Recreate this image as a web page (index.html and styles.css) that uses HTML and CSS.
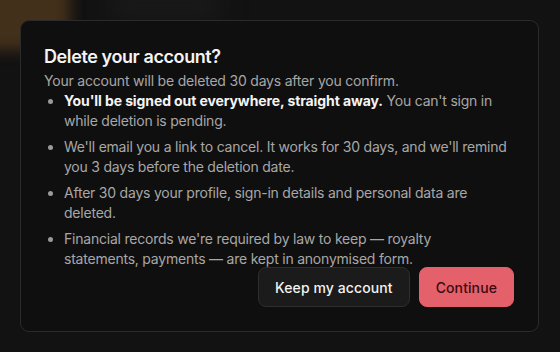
FILE: index.html
```html
<!DOCTYPE html>
<html lang="en">
<head>
<meta charset="utf-8">
<title>Delete your account?</title>
<link rel="stylesheet" href="styles.css">
</head>
<body>
<div class="backdrop">
  <div class="glow"></div>
  <div class="haze"></div>
  <section class="dialog" role="dialog" aria-labelledby="dlg-title">
    <h2 id="dlg-title" class="title">Delete your account?</h2>
    <p class="lead">Your account will be deleted 30 days after you confirm.</p>
    <ul class="points">
      <li><strong>You'll be signed out everywhere, straight away.</strong> You can't sign in while deletion is pending.</li>
      <li>We'll email you a link to cancel. It works for 30 days, and we'll remind you 3 days before the deletion date.</li>
      <li>After 30 days your profile, sign-in details and personal data are deleted.</li>
      <li>Financial records we're required by law to keep — royalty statements, payments — are kept in anonymised form.</li>
    </ul>
    <div class="actions">
      <button class="btn btn-secondary" type="button">Keep my account</button>
      <button class="btn btn-danger" type="button">Continue</button>
    </div>
  </section>
</div>
</body>
</html>
```
FILE: styles.css
```css
html, body {
  margin: 0;
  padding: 0;
  background: #131313;
}
body {
  width: 560px;
  height: 352px;
  overflow: hidden;
  font-family: "Inter", "Liberation Sans", sans-serif;
}
.backdrop {
  position: relative;
  width: 560px;
  height: 352px;
  padding: 20px 0 0 20px;
  box-sizing: border-box;
  background: #121212;
}
.glow {
  position: absolute;
  left: -20px;
  top: -20px;
  width: 90px;
  height: 70px;
  background: #43301a;
  filter: blur(7px);
}
.haze {
  position: absolute;
  left: 110px;
  top: -10px;
  width: 110px;
  height: 30px;
  background: #1a1a1a;
  filter: blur(12px);
}
.dialog {
  position: relative;
  width: 519px;
  box-sizing: border-box;
  padding: 25px 24px 24px 23px;
  background: #100f0f;
  border: 1px solid #2b2b2b;
  border-radius: 9px;
  display: flex;
  flex-direction: column;
}
.title {
  margin: 0;
  font-size: 18px;
  line-height: 22px;
  font-weight: 600;
  color: #f4f4f4;
  letter-spacing: -0.4px;
}
.lead {
  margin: 3px 0 0 0;
  font-size: 14px;
  line-height: 20px;
  color: #a7a7a7;
  letter-spacing: -0.2px;
}
.points {
  margin: 0;
  padding: 0 5px 0 20px;
  font-size: 14px;
  line-height: 20px;
  color: #a7a7a7;
  letter-spacing: -0.22px;
}
.points li {
  margin-bottom: 6px;
}
.points li:last-child {
  margin-bottom: 0;
}
.points li::marker {
  color: #9a9a9a;
}
.points strong {
  color: #f4f4f4;
  font-weight: 700;
  letter-spacing: -0.1px;
}
.actions {
  margin-top: -2px;
  display: flex;
  justify-content: flex-end;
  gap: 9px;
}
.btn {
  font-family: inherit;
  font-size: 14px;
  font-weight: 550;
  height: 40px;
  border-radius: 8px;
  padding: 0 16px;
  cursor: pointer;
  letter-spacing: 0.1px;
}
.btn-secondary {
  background: #1b1b1b;
  border: 1px solid #2e2e2e;
  color: #f2f2f2;
}
.btn-danger {
  background: #e4606a;
  border: 1px solid #e4606a;
  color: #3a0b10;
}
```
